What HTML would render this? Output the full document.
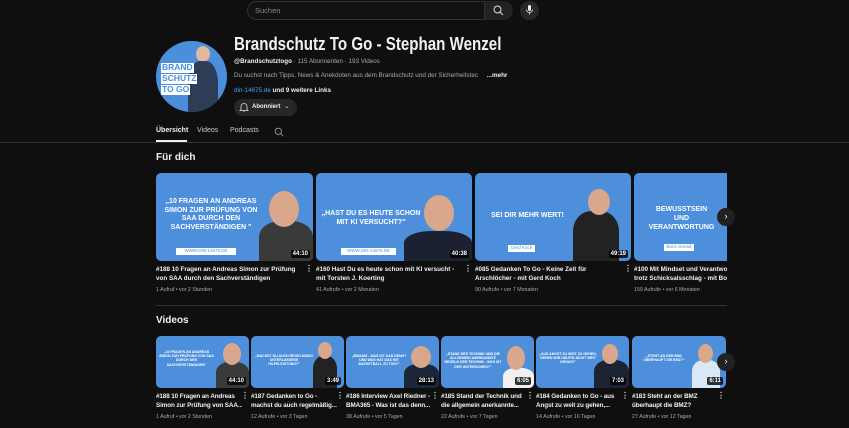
<!DOCTYPE html>
<html><head><meta charset="utf-8"><style>
*{margin:0;padding:0;box-sizing:border-box}
body{width:849px;height:428px;overflow:hidden;background:#0f0f0f;font-family:"Liberation Sans",sans-serif;color:#f1f1f1;position:relative}
.a{position:absolute}
.thumb{position:absolute;background:#4d8fdb;border-radius:5px;overflow:hidden}
.tt{position:absolute;color:#fff;font-weight:bold;text-align:center}
.dur{position:absolute;right:3px;bottom:3px;background:rgba(0,0,0,.8);color:#fff;font-size:6px;font-weight:bold;padding:1px 2px;border-radius:2px}
.ttl{position:absolute;font-size:6.3px;font-weight:bold;line-height:9px;color:#f1f1f1;height:18px;overflow:hidden}
.r2 .ttl{letter-spacing:-0.1px}
.meta{position:absolute;font-size:5.3px;color:#aaa}
.dots{position:absolute;font-size:8px;color:#ddd;font-weight:bold}
.person{position:absolute;bottom:0;background:#2b2b2b;border-radius:40% 40% 0 0}
.head{position:absolute;background:#d9a88c;border-radius:50%}
.lbl{position:absolute;background:#fff;color:#4d8fdb;font-size:4.5px;text-align:center}
</style></head><body>
<div class="a" style="left:247px;top:1px;width:238px;height:19px;border:1px solid #303030;border-radius:10px 0 0 10px;background:#121212"></div>
<div class="a" style="left:255px;top:6px;font-size:7.5px;color:#888">Suchen</div>
<div class="a" style="left:485px;top:1px;width:28px;height:19px;background:#222;border-radius:0 10px 10px 0"></div>
<svg class="a" style="left:493px;top:5px" width="11" height="11" viewBox="0 0 11 11"><circle cx="4.5" cy="4.5" r="3.5" fill="none" stroke="#ddd" stroke-width="1"/><path d="M7 7l3 3" stroke="#ddd"/></svg>
<div class="a" style="left:520px;top:1px;width:19px;height:19px;border-radius:50%;background:#272727"></div>
<svg class="a" style="left:525px;top:5px" width="9" height="10" viewBox="0 0 9 10"><rect x="3" y="0" width="3" height="6" rx="1.5" fill="#eee"/><path d="M1.5 4.5a3 3 0 006 0M4.5 7.5v2" stroke="#eee" fill="none" stroke-width=".8"/></svg>

<div class="a" style="left:156px;top:41px;width:71px;height:71px;border-radius:50%;background:#4b8fdc;overflow:hidden">
 <div class="a" style="left:40px;top:5px;width:14px;height:16px;border-radius:50%;background:#e0b8a0"></div>
 <div class="a" style="left:32px;top:20px;width:30px;height:55px;background:#2c3d55;border-radius:40% 40% 0 0"></div>
 <div class="a" style="left:5px;top:22px;background:#fff;color:#4b8fdc;font-weight:bold;font-size:8.5px;line-height:9.5px;padding:0 1px">BRAND</div>
 <div class="a" style="left:5px;top:33px;background:#fff;color:#4b8fdc;font-weight:bold;font-size:8.5px;line-height:9.5px;padding:0 1px">SCHUTZ</div>
 <div class="a" style="left:5px;top:44px;background:#fff;color:#4b8fdc;font-weight:bold;font-size:8.5px;line-height:9.5px;padding:0 1px">TO GO</div>
</div>
<div class="a" style="left:234px;top:34px;font-size:18px;font-weight:bold;white-space:nowrap;transform:scaleX(0.84);transform-origin:0 0">Brandschutz To Go - Stephan Wenzel</div>
<div class="a" style="left:234px;top:58px;font-size:6.3px;color:#aaa"><b style="color:#f1f1f1">@Brandschutztogo</b> · 115 Abonnenten · 193 Videos</div>
<div class="a" style="left:234px;top:72px;font-size:6.3px;color:#aaa">Du suchst nach Tipps, News &amp; Anekdoten aus dem Brandschutz und der Sicherheitstec&nbsp;&nbsp;&nbsp;&nbsp;&nbsp;<b style="color:#f1f1f1">...mehr</b></div>
<div class="a" style="left:234px;top:87px;font-size:6.3px;color:#3ea6ff">din-14675.de <b style="color:#f1f1f1">und 9 weitere Links</b></div>
<div class="a" style="left:234px;top:99px;width:63px;height:17px;border-radius:9px;background:#272727"></div>
<svg class="a" style="left:239px;top:102px" width="10" height="10" viewBox="0 0 10 10"><path d="M2 7.5V4.5a3 3 0 016 0v3l1 1H1z M4 9h2" fill="none" stroke="#ddd" stroke-width=".8"/></svg>
<div class="a" style="left:252px;top:104px;font-size:6px;font-weight:bold">Abonniert</div>
<div class="a" style="left:284px;top:102px;font-size:7px;color:#ccc">⌄</div>

<div class="a" style="left:156px;top:127px;font-size:7px;font-weight:bold">Übersicht</div>
<div class="a" style="left:197px;top:127px;font-size:7px;color:#ccc">Videos</div>
<div class="a" style="left:230px;top:127px;font-size:7px;color:#ccc">Podcasts</div>
<svg class="a" style="left:274px;top:127px" width="10" height="10" viewBox="0 0 10 10"><circle cx="4.3" cy="4.3" r="3.2" fill="none" stroke="#aaa" stroke-width=".8"/><path d="M6.6 6.6l2.6 2.6" stroke="#aaa" stroke-width=".8"/></svg>
<div class="a" style="left:0;top:142px;width:849px;height:1px;background:#303030"></div>
<div class="a" style="left:156px;top:140px;width:31px;height:2px;background:#f1f1f1"></div>

<div class="a" style="left:156px;top:152px;font-size:10px;font-weight:bold">Für dich</div>

<div class="thumb" style="left:156px;top:173px;width:157px;height:88px">
 <div class="tt" style="left:5px;top:25px;width:100px;font-size:7px;line-height:8.5px">„10 FRAGEN AN ANDREAS SIMON ZUR PRÜFUNG VON SAA DURCH DEN SACHVERSTÄNDIGEN "</div>
 <div class="lbl" style="left:20px;top:75px;width:60px;height:7px">WWW.DIN-14675.DE</div>
 <div class="person" style="left:103px;top:48px;width:54px;height:40px;background:#3a3a3a"></div>
 <div class="head" style="left:113px;top:18px;width:30px;height:36px"></div>
 <div class="dur">44:10</div></div>
<div class="thumb" style="left:316px;top:173px;width:156px;height:88px">
 <div class="tt" style="left:5px;top:37px;width:100px;font-size:7px;line-height:8.5px">„HAST DU ES HEUTE SCHON MIT KI VERSUCHT?"</div>
 <div class="lbl" style="left:25px;top:75px;width:55px;height:7px">WWW.DIN-14675.DE</div>
 <div class="person" style="left:88px;top:58px;width:68px;height:30px;background:#1b2130"></div>
 <div class="head" style="left:108px;top:22px;width:30px;height:36px"></div>
 <div class="dur">40:38</div></div>
<div class="thumb" style="left:475px;top:173px;width:156px;height:88px">
 <div class="tt" style="left:5px;top:39px;width:95px;font-size:7px">SEI DIR MEHR WERT!</div>
 <div class="lbl" style="left:33px;top:72px;width:27px;height:7px">Gerd Koch</div>
 <div class="person" style="left:98px;top:38px;width:46px;height:50px;background:#222"></div>
 <div class="head" style="left:113px;top:16px;width:22px;height:26px"></div>
 <div class="dur">49:19</div></div>
<div class="thumb" style="left:634px;top:173px;width:93px;height:88px;border-radius:5px 0 0 5px">
 <div class="tt" style="left:10px;top:32px;width:75px;font-size:7px;line-height:9px">BEWUSSTSEIN<br>UND<br>VERANTWORTUNG</div>
 <div class="lbl" style="left:30px;top:71px;width:30px;height:7px">Boris Grundl</div></div>
<div class="a" style="left:717px;top:208px;width:18px;height:18px;border-radius:50%;background:#212121;color:#fff;font-size:9px;text-align:center;line-height:17px">›</div>

<div class="ttl" style="left:156px;top:265px;width:150px">#188 10 Fragen an Andreas Simon zur Prüfung von SAA durch den Sachverständigen</div>
<div class="meta" style="left:156px;top:287px">1 Aufruf • vor 2 Stunden</div>
<div class="dots" style="left:305px;top:264px">⋮</div>
<div class="ttl" style="left:316px;top:265px;width:148px">#160 Hast Du es heute schon mit KI versucht - mit Torsten J. Koerting</div>
<div class="meta" style="left:316px;top:287px">41 Aufrufe • vor 2 Monaten</div>
<div class="dots" style="left:464px;top:264px">⋮</div>
<div class="ttl" style="left:475px;top:265px;width:148px">#085 Gedanken To Go - Keine Zeit für Arschlöcher - mit Gerd Koch</div>
<div class="meta" style="left:475px;top:287px">90 Aufrufe • vor 7 Monaten</div>
<div class="dots" style="left:624px;top:264px">⋮</div>
<div class="ttl" style="left:634px;top:265px;width:93px;white-space:nowrap;overflow:hidden">#100 Mit Mindset und Verantwort<br>trotz Schicksalsschlag - mit Boris</div>
<div class="meta" style="left:634px;top:287px">159 Aufrufe • vor 6 Monaten</div>

<div class="a" style="left:156px;top:305px;width:571px;height:1px;background:#303030"></div>
<div class="a" style="left:156px;top:315px;font-size:10px;font-weight:bold">Videos</div>

<div class="thumb" style="left:156px;top:336px;width:93px;height:52px"><div class="tt" style="left:3px;top:14px;width:55px;font-size:3.5px;line-height:4.2px">„10 FRAGEN AN ANDREAS SIMON ZUR PRÜFUNG VON SAA DURCH DEN SACHVERSTÄNDIGEN"</div><div class="person" style="left:60px;top:26px;width:33px;height:26px;background:#3a3a3a"></div><div class="head" style="left:67px;top:7px;width:18px;height:22px"></div><div class="dur">44:10</div></div>
<div class="thumb" style="left:251px;top:336px;width:93px;height:52px"><div class="tt" style="left:3px;top:18px;width:60px;font-size:3.5px;line-height:4.2px">„MACHST DU AUCH REGELMÄßIG UNTERLASSENE HILFELEISTUNG?"</div><div class="person" style="left:62px;top:20px;width:24px;height:32px;background:#222"></div><div class="head" style="left:67px;top:6px;width:14px;height:17px"></div><div class="dur">3:49</div></div>
<div class="thumb" style="left:346px;top:336px;width:93px;height:52px"><div class="tt" style="left:3px;top:18px;width:60px;font-size:3.5px;line-height:4.2px">„BMA365 - WAS IST DAS DENN? UND WAS HAT DAS MIT BASKETBALL ZU TUN?"</div><div class="person" style="left:58px;top:28px;width:35px;height:24px;background:#1d2538"></div><div class="head" style="left:65px;top:10px;width:20px;height:22px"></div><div class="dur">28:13</div></div>
<div class="thumb" style="left:441px;top:336px;width:93px;height:52px"><div class="tt" style="left:3px;top:16px;width:58px;font-size:3.5px;line-height:4.2px">„STAND DER TECHNIK UND DIE ALLGEMEIN ANERKANNTE REGELN DER TECHNIK - WAS IST DER UNTERSCHIED?"</div><div class="person" style="left:62px;top:32px;width:31px;height:20px;background:#f0f0f0"></div><div class="head" style="left:66px;top:10px;width:18px;height:24px"></div><div class="dur">6:05</div></div>
<div class="thumb" style="left:536px;top:336px;width:93px;height:52px"><div class="tt" style="left:3px;top:16px;width:58px;font-size:3.5px;line-height:4.2px">„AUS ANGST ZU WEIT ZU GEHEN, GEHEN WIR HÄUFIG NICHT WEIT GENUG!"</div><div class="person" style="left:58px;top:24px;width:35px;height:28px;background:#1c2433"></div><div class="head" style="left:66px;top:8px;width:16px;height:20px"></div><div class="dur">7:03</div></div>
<div class="thumb" style="left:632px;top:336px;width:94px;height:52px"><div class="tt" style="left:3px;top:18px;width:58px;font-size:3.5px;line-height:4.2px">„STEHT AN DER BMZ ÜBERHAUPT DIE BMZ?"</div><div class="person" style="left:60px;top:24px;width:28px;height:28px;background:#d8e8f5"></div><div class="head" style="left:66px;top:8px;width:15px;height:19px"></div><div class="dur">6:11</div></div>
<div class="a" style="left:717px;top:353px;width:18px;height:18px;border-radius:50%;background:#212121;color:#fff;font-size:9px;text-align:center;line-height:17px">›</div>

<div class="r2">
<div class="ttl" style="left:156px;top:392px;width:86px;white-space:nowrap">#188 10 Fragen an Andreas<br>Simon zur Prüfung von SAA...</div><div class="meta" style="left:156px;top:414px">1 Aufruf • vor 2 Stunden</div><div class="dots" style="left:241px;top:391px">⋮</div>
<div class="ttl" style="left:251px;top:392px;width:86px;white-space:nowrap">#187 Gedanken to Go -<br>machst du auch regelmäßig...</div><div class="meta" style="left:251px;top:414px">12 Aufrufe • vor 3 Tagen</div><div class="dots" style="left:336px;top:391px">⋮</div>
<div class="ttl" style="left:346px;top:392px;width:86px;white-space:nowrap">#186 Interview Axel Riedner -<br>BMA365 - Was ist das denn...</div><div class="meta" style="left:346px;top:414px">38 Aufrufe • vor 5 Tagen</div><div class="dots" style="left:431px;top:391px">⋮</div>
<div class="ttl" style="left:441px;top:392px;width:86px;white-space:nowrap">#185 Stand der Technik und<br>die allgemein anerkannte...</div><div class="meta" style="left:441px;top:414px">22 Aufrufe • vor 7 Tagen</div><div class="dots" style="left:526px;top:391px">⋮</div>
<div class="ttl" style="left:536px;top:392px;width:86px;white-space:nowrap">#184 Gedanken to Go - aus<br>Angst zu weit zu gehen,...</div><div class="meta" style="left:536px;top:414px">14 Aufrufe • vor 10 Tagen</div><div class="dots" style="left:621px;top:391px">⋮</div>
<div class="ttl" style="left:632px;top:392px;width:86px;white-space:nowrap">#183 Steht an der BMZ<br>überhaupt die BMZ?</div><div class="meta" style="left:632px;top:414px">27 Aufrufe • vor 12 Tagen</div><div class="dots" style="left:717px;top:391px">⋮</div>
</div>
</body></html>
